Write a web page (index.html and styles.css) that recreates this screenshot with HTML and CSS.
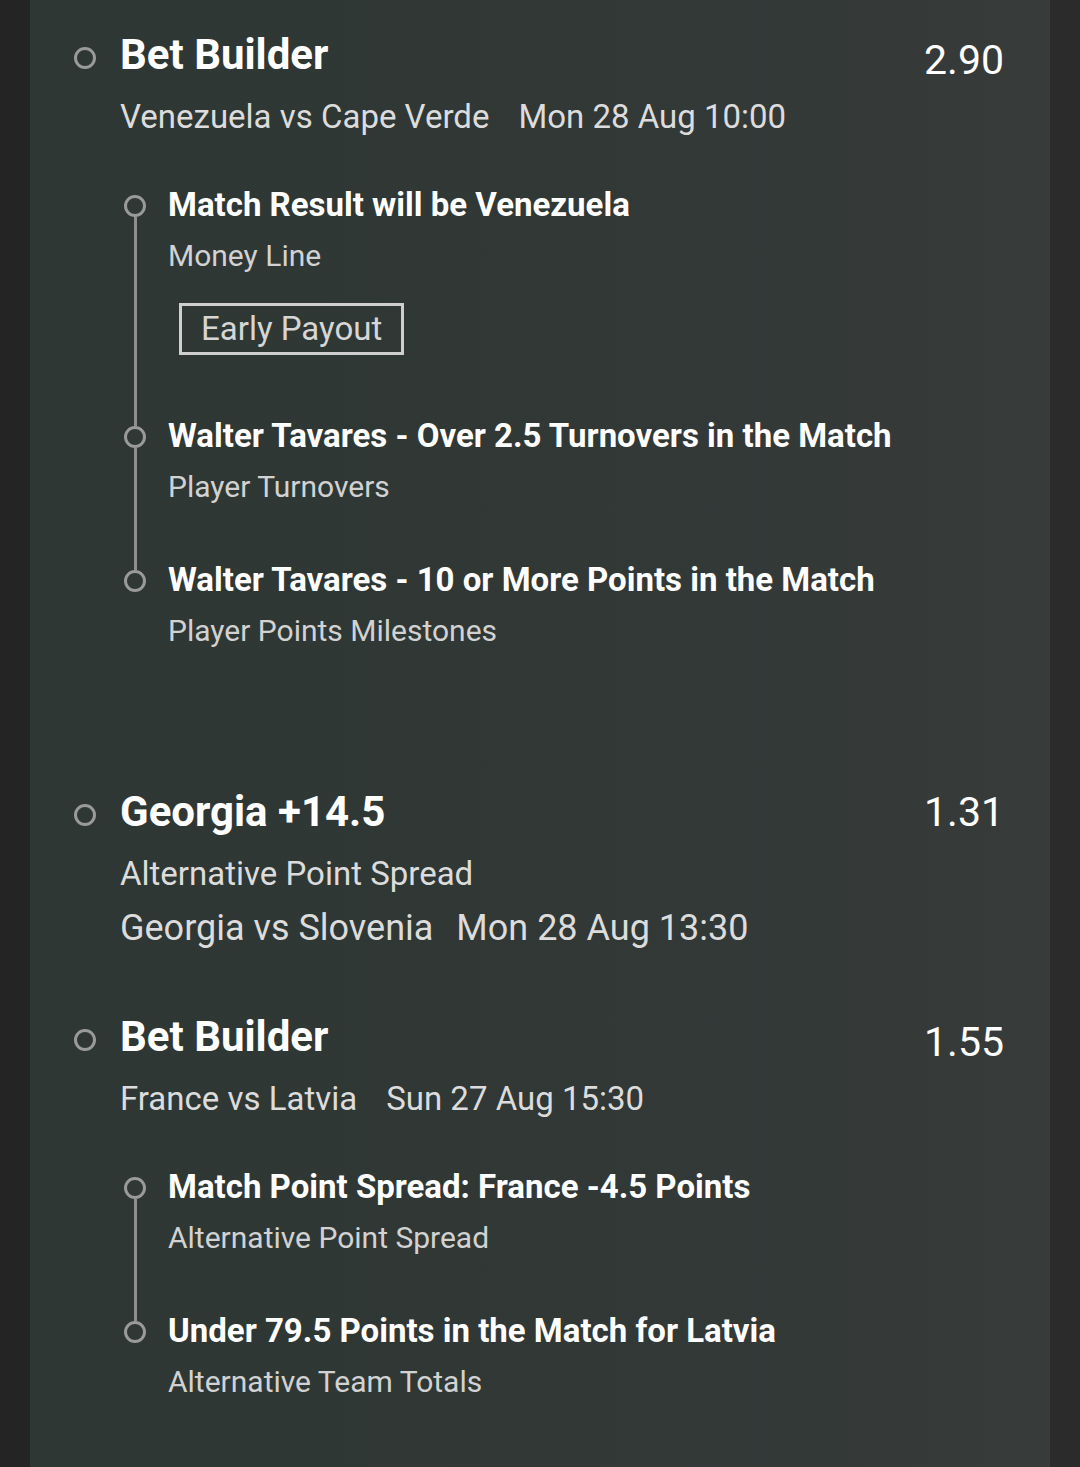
FILE: index.html
```html
<!DOCTYPE html>
<html lang="en">
<head>
  <meta charset="UTF-8">
  <meta name="viewport" content="width=device-width, initial-scale=1.0">
  <title>Bet Slip</title>
  <link rel="stylesheet" href="styles.css">
</head>
<body>
  <main class="panel">

    <!-- Bet Builder: Venezuela -->
    <section class="bet">
      <span class="bet-dot"></span>
      <div class="bet-body">
        <h2 class="bet-title">Bet Builder</h2>
        <p class="bet-line"><span>Venezuela vs Cape Verde</span><span>Mon 28 Aug 10:00</span></p>
        <ul class="legs">
          <li class="leg">
            <div class="leg-marker"><span class="leg-dot"></span><span class="leg-line"></span></div>
            <div class="leg-body">
              <h3 class="leg-title">Match Result will be Venezuela</h3>
              <p class="leg-sub">Money Line</p>
              <span class="tag">Early Payout</span>
            </div>
          </li>
          <li class="leg">
            <div class="leg-marker"><span class="leg-dot"></span><span class="leg-line"></span></div>
            <div class="leg-body">
              <h3 class="leg-title">Walter Tavares - Over 2.5 Turnovers in the Match</h3>
              <p class="leg-sub">Player Turnovers</p>
            </div>
          </li>
          <li class="leg">
            <div class="leg-marker"><span class="leg-dot"></span></div>
            <div class="leg-body">
              <h3 class="leg-title">Walter Tavares - 10 or More Points in the Match</h3>
              <p class="leg-sub">Player Points Milestones</p>
            </div>
          </li>
        </ul>
      </div>
      <span class="odds">2.90</span>
    </section>

    <!-- Single: Georgia -->
    <section class="bet">
      <span class="bet-dot"></span>
      <div class="bet-body">
        <h2 class="bet-title">Georgia +14.5</h2>
        <p class="bet-line bet-market">Alternative Point Spread</p>
        <p class="bet-line bet-event"><span>Georgia vs Slovenia</span><span>Mon 28 Aug 13:30</span></p>
      </div>
      <span class="odds odds-single">1.31</span>
    </section>

    <!-- Bet Builder: France -->
    <section class="bet">
      <span class="bet-dot"></span>
      <div class="bet-body">
        <h2 class="bet-title">Bet Builder</h2>
        <p class="bet-line"><span>France vs Latvia</span><span>Sun 27 Aug 15:30</span></p>
        <ul class="legs">
          <li class="leg">
            <div class="leg-marker"><span class="leg-dot"></span><span class="leg-line"></span></div>
            <div class="leg-body">
              <h3 class="leg-title">Match Point Spread: France -4.5 Points</h3>
              <p class="leg-sub">Alternative Point Spread</p>
            </div>
          </li>
          <li class="leg">
            <div class="leg-marker"><span class="leg-dot"></span></div>
            <div class="leg-body">
              <h3 class="leg-title">Under 79.5 Points in the Match for Latvia</h3>
              <p class="leg-sub">Alternative Team Totals</p>
            </div>
          </li>
        </ul>
      </div>
      <span class="odds">1.55</span>
    </section>

  </main>
</body>
</html>
```

FILE: styles.css
```css
:root {
  --outer-color: #242424;
  --outer-right: #2b2b2b;
  --text-color: #ffffff;
  --text-secondary: #dcdcdc;
  --text-muted: #d2d2d2;
  --dot-color: #9a9a9a;
  --line-color: #8e8e8e;
}

html,
body {
  margin: 0;
  padding: 0;
}

body {
  font-family: Roboto, "Liberation Sans", Arial, sans-serif;
  background: linear-gradient(90deg, var(--outer-color) 0, var(--outer-color) 50%, var(--outer-right) 50%);
  color: var(--text-color);
  min-height: 100vh;
}

.panel {
  margin: 0 30px;
  min-height: 1467px;
  box-sizing: border-box;
  padding: 30px 46px 0 44px;
  background: linear-gradient(90deg, #2e3734 0%, #313836 55%, #373b3a 100%);
}

/* 单注 */
.bet {
  display: grid;
  grid-template-columns: 22px 1fr auto;
  column-gap: 24px;
  align-items: start;
  margin-bottom: 62px;
}

.bet:last-child {
  margin-bottom: 0;
}

.bet-dot {
  width: 16px;
  height: 16px;
  margin-top: 17px;
  border: 3px solid var(--dot-color);
  border-radius: 50%;
}

.bet-title {
  margin: 0;
  font-size: 42px;
  line-height: 50px;
  font-weight: 700;
}

.bet-line {
  margin: 15px 0 0;
  font-size: 33px;
  line-height: 44px;
  color: var(--text-secondary);
  display: flex;
  gap: 29px;
}

.bet-line.bet-market {
  margin-top: 15px;
}

.bet-line.bet-event {
  margin-top: 10px;
  font-size: 36px;
  gap: 23px;
}

.odds {
  font-size: 41px;
  line-height: 50px;
  margin-top: 5px;
  color: var(--text-color);
}

.odds.odds-single {
  margin-top: 0;
}

/* 组合投注的各个选项 */
.legs {
  list-style: none;
  margin: 46px 0 0;
  padding: 0 0 74px;
}

.bet:last-child .legs {
  padding-bottom: 40px;
}

.leg {
  display: grid;
  grid-template-columns: 22px 1fr;
  column-gap: 22px;
  margin-left: 4px;
}

.leg-marker {
  display: flex;
  flex-direction: column;
  align-items: center;
  padding-top: 10px;
}

.leg-dot {
  flex: none;
  width: 16px;
  height: 16px;
  border: 3px solid var(--dot-color);
  border-radius: 50%;
  background-color: #2f3835;
}

.leg-line {
  flex: 1;
  width: 3px;
  margin-bottom: -10px;
  background-color: var(--line-color);
}

.leg-body {
  padding-bottom: 53px;
}

.leg:last-child .leg-body {
  padding-bottom: 0;
}

.leg-title {
  margin: 0;
  font-size: 33px;
  line-height: 40px;
  font-weight: 700;
}

.leg-sub {
  margin: 11px 0 0;
  font-size: 30px;
  line-height: 40px;
  color: var(--text-muted);
}

.tag {
  display: inline-block;
  margin: 27px 0 8px 11px;
  padding: 0 19px;
  height: 46px;
  line-height: 46px;
  border: 3px solid #cfcfcf;
  font-size: 33px;
  color: #d6d6d6;
}
```
